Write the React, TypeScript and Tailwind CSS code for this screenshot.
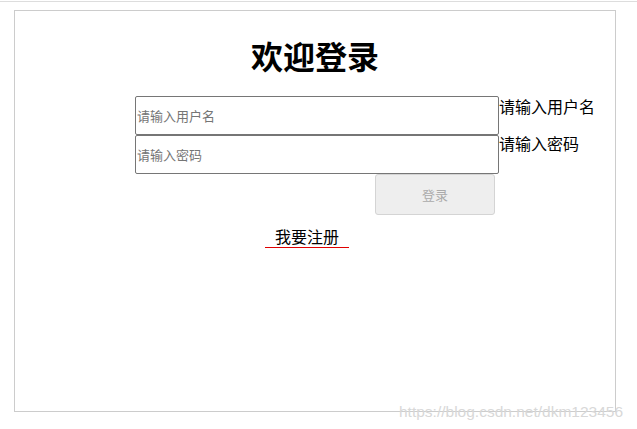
import React from "react";

export default function App() {
  const cjk = { fontFamily: '"Noto Sans CJK SC", "Noto Sans", sans-serif' };
  return (
    <div className="relative w-[637px] h-[429px] bg-white overflow-hidden" style={cjk}>
      <div className="mt-[1px] h-px bg-[#dddddd]" />
      <div className="ml-[14px] mt-[8px] w-[602px] h-[402px] border border-[#cccccc]">
        <h1 className="pt-[28px] text-center text-[32px] leading-[32px] font-bold text-black">欢迎登录</h1>
        <div className="mt-[25px] ml-[120px] flex flex-col">
          <div className="flex items-start">
            <input
              className="w-[364px] h-[39px] border border-[#767676] rounded-[2px] px-[1px] text-[13px] text-black placeholder:text-[#757575] outline-none"
              placeholder="请输入用户名"
            />
            <span className="mt-[-1px] text-[16px] leading-[22px] text-black">请输入用户名</span>
          </div>
          <div className="flex items-start">
            <input
              type="password"
              className="w-[364px] h-[39px] border border-[#767676] rounded-[2px] px-[1px] text-[13px] text-black placeholder:text-[#757575] outline-none"
              placeholder="请输入密码"
            />
            <span className="mt-[-3px] text-[16px] leading-[22px] text-black">请输入密码</span>
          </div>
          <button
            disabled
            className="ml-[240px] w-[120px] h-[41px] bg-[#eeeeee] border border-[#d4d4d4] rounded-[3px] text-[13px] text-[#aaaaaa]"
          >
            登录
          </button>
        </div>
        <div className="mt-[11px] ml-[250px] w-[84px] text-center text-[16px] leading-[20px] text-black border-b border-[#e00000] pb-[1px]">
          我要注册
        </div>
      </div>
      <div
        className="absolute left-[399px] top-[400px] text-[15.5px] text-[#d8d8d8]"
        style={{ fontFamily: '"Liberation Sans", Arial, sans-serif' }}
      >
        https://blog.csdn.net/dkm123456
      </div>
    </div>
  );
}
